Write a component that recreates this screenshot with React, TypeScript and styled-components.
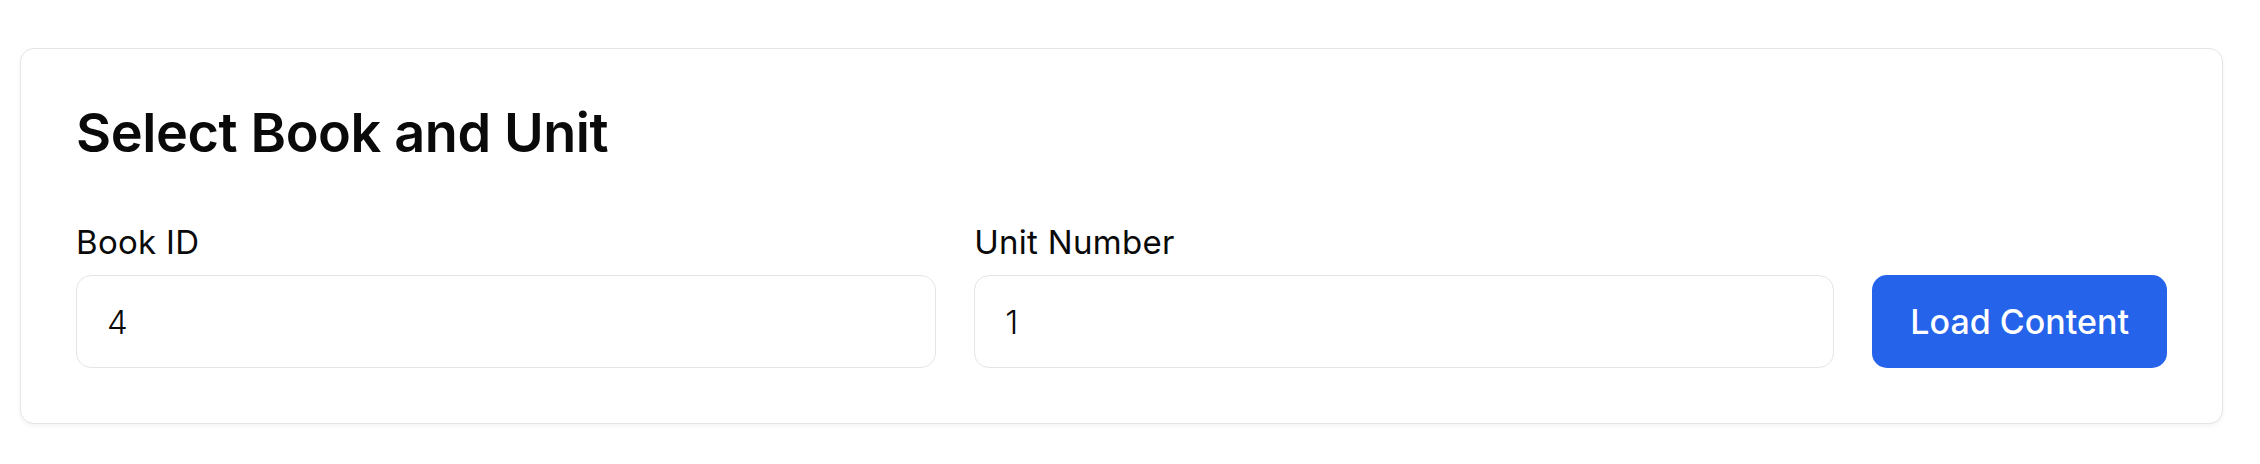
import React from "react";
import styled, { createGlobalStyle } from "styled-components";

const Global = createGlobalStyle`
  html, body { margin: 0; padding: 0; background: #ffffff; }
  body { font-family: Inter, "Noto Sans", "Liberation Sans", sans-serif; color: #0a0a0a; }
  * { box-sizing: border-box; }
`;

const Page = styled.div`
  padding: 48px 37px 40px 20px;
`;

const Card = styled.section`
  background: #ffffff;
  border: 1px solid #e5e5e5;
  border-radius: 14px;
  box-shadow: 0 2px 4px rgba(0, 0, 0, 0.05);
  padding: 55px;
`;

const Title = styled.h2`
  margin: 0 0 58px 0;
  font-size: 54px;
  line-height: 58px;
  font-weight: 600;
  letter-spacing: -0.4px;
  color: #0a0a0a;
`;

const Row = styled.div`
  display: grid;
  grid-template-columns: 1fr 1fr auto;
  column-gap: 38px;
  align-items: end;
`;

const Field = styled.div`
  display: flex;
  flex-direction: column;
`;

const Label = styled.label`
  font-size: 33px;
  line-height: 44px;
  font-weight: 400;
  letter-spacing: 0.3px;
  color: #0a0a0a;
  margin-bottom: 11px;
`;

const Input = styled.input`
  height: 93px;
  border: 1px solid #e5e5e5;
  border-radius: 15px;
  padding: 0 30px;
  font-family: Inter, "Noto Sans", sans-serif;
  font-size: 33px;
  font-weight: 300;
  color: #0a0a0a;
  background: #ffffff;
  outline: none;
`;

const Button = styled.button`
  height: 93px;
  padding: 0 38px;
  border: none;
  border-radius: 15px;
  background: #2563eb;
  color: #ffffff;
  font-family: Inter, "Noto Sans", sans-serif;
  font-size: 34px;
  font-weight: 500;
  cursor: pointer;
`;

export default function App() {
  return (
    <>
      <Global />
      <Page>
        <Card>
          <Title>Select Book and Unit</Title>
          <Row>
            <Field>
              <Label htmlFor="book">Book ID</Label>
              <Input id="book" defaultValue="4" />
            </Field>
            <Field>
              <Label htmlFor="unit">Unit Number</Label>
              <Input id="unit" defaultValue="1" />
            </Field>
            <Button>Load Content</Button>
          </Row>
        </Card>
      </Page>
    </>
  );
}
